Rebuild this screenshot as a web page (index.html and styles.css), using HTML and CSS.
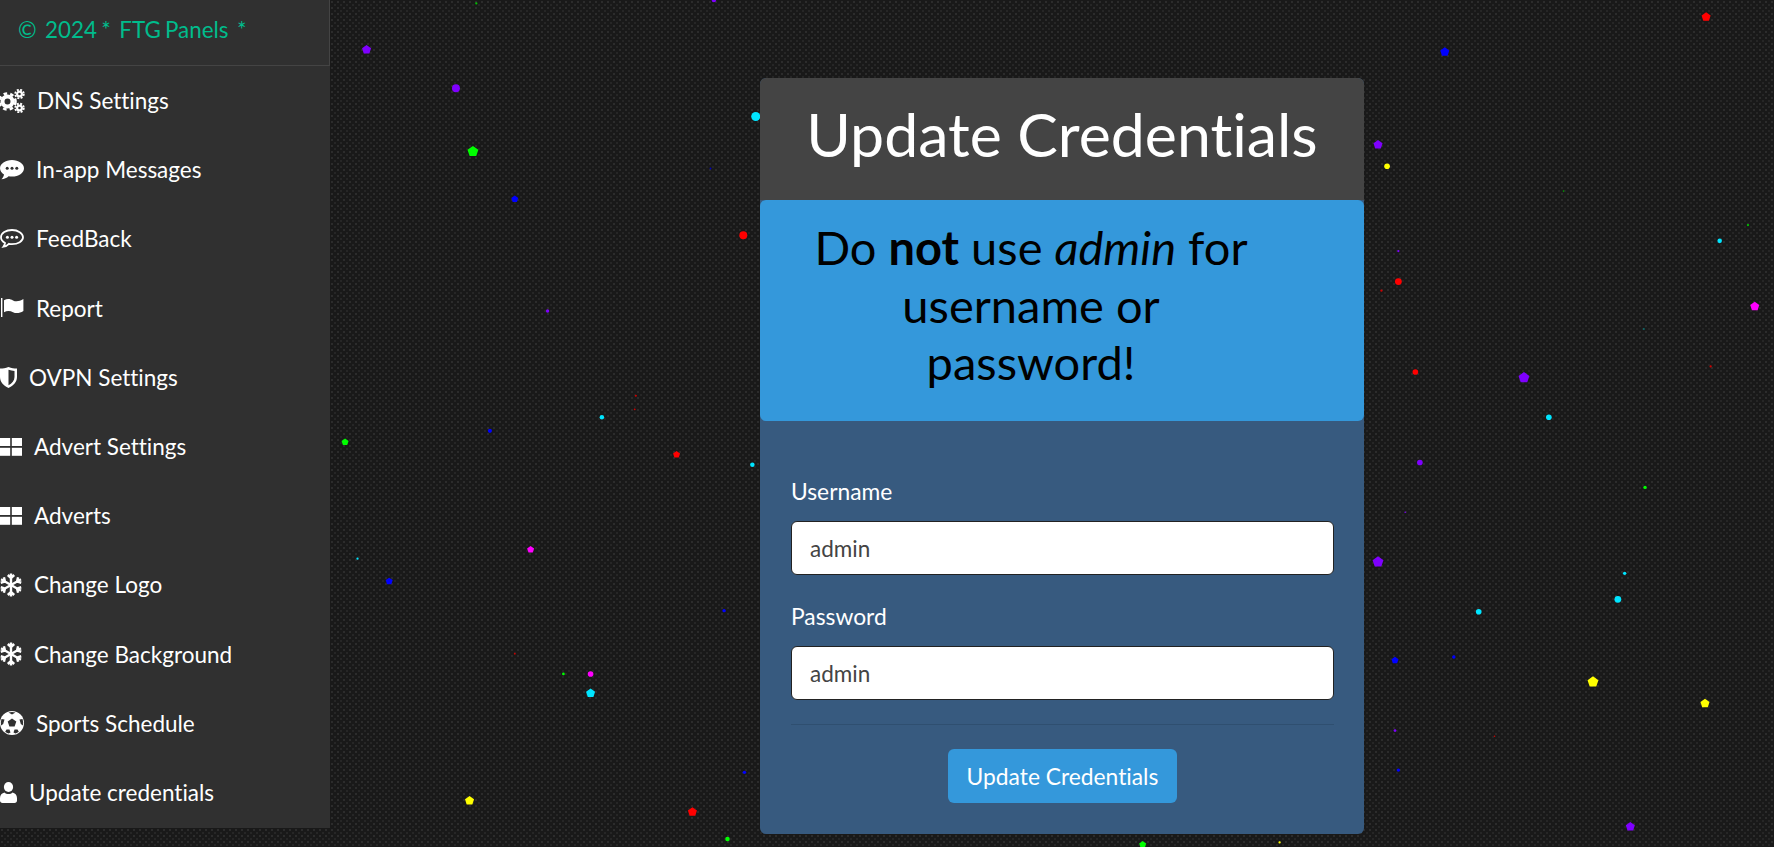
FILE: index.html
```html
<!DOCTYPE html>
<html>
<head>
    <title>Update Credentials</title>
    <link rel="stylesheet" href="styles.css">
</head>
<body>
    <!-- falling dots behind the panel -->
    <svg class="particles" viewBox="0 0 1568 749" preserveAspectRatio="none">
        <defs>
            <polygon id="p3" points="0,-3.200 3.100,-1 1.900,2.600 -1.900,2.600 -3.100,-1"/>
            <polygon id="p4" points="0,-4.200 4,-1.300 2.500,3.400 -2.500,3.400 -4,-1.300"/>
            <polygon id="p5" points="0,-5 4.800,-1.500 2.900,4 -2.900,4 -4.800,-1.500"/>
        </defs>
        <use href="#p4" x="324" y="44" fill="#7f00ff"/>
        <circle cx="421" cy="3" r="1" fill="#00c000"/>
        <circle cx="631" cy="0" r="2" fill="#7f00ff"/>
        <circle cx="403" cy="78" r="3.500" fill="#7f00ff"/>
        <use href="#p5" x="418" y="134" fill="#00ff00"/>
        <use href="#p3" x="455" y="176" fill="#0000ff"/>
        <circle cx="668" cy="103" r="4" fill="#00e5ff"/>
        <circle cx="657" cy="208" r="3.500" fill="#ff0000"/>
        <circle cx="628" cy="149" r=".8" fill="#0000c0"/>
        <circle cx="484" cy="275" r="1.500" fill="#7f00ff"/>
        <circle cx="562" cy="350" r=".9" fill="#d00000"/>
        <circle cx="561" cy="362" r=".8" fill="#d00000"/>
        <circle cx="532" cy="369" r="2" fill="#00e5ff"/>
        <circle cx="433" cy="381" r="1.800" fill="#0000ff"/>
        <use href="#p3" x="305" y="391" fill="#00ff00"/>
        <use href="#p3" x="598" y="402" fill="#ff0000"/>
        <circle cx="665" cy="411" r="2" fill="#00e5ff"/>
        <use href="#p3" x="469" y="486" fill="#ff00ff"/>
        <circle cx="316" cy="494" r="1" fill="#00e5ff"/>
        <use href="#p3" x="344" y="514" fill="#0000ff"/>
        <circle cx="640" cy="540" r="1.500" fill="#0000ff"/>
        <circle cx="455" cy="578" r=".8" fill="#d00000"/>
        <circle cx="498" cy="596" r="1.200" fill="#00ff00"/>
        <circle cx="522" cy="596" r="2.500" fill="#ff00ff"/>
        <use href="#p4" x="522" y="613" fill="#00e5ff"/>
        <circle cx="658" cy="683" r="1.500" fill="#0000ff"/>
        <use href="#p4" x="415" y="708" fill="#ffff00"/>
        <use href="#p4" x="612" y="718" fill="#ff0000"/>
        <circle cx="643" cy="742" r="2" fill="#00ff00"/>
        <use href="#p4" x="1508" y="15" fill="#ff0000"/>
        <use href="#p4" x="1277" y="46" fill="#0000ff"/>
        <use href="#p4" x="1218" y="128" fill="#7f00ff"/>
        <circle cx="1226" cy="147" r="2.500" fill="#ffff00"/>
        <circle cx="1382" cy="169" r=".7" fill="#00a000"/>
        <circle cx="1545" cy="199" r="1" fill="#00c000"/>
        <circle cx="1520" cy="213" r="2" fill="#00e5ff"/>
        <circle cx="1236" cy="222" r="1" fill="#7f00ff"/>
        <circle cx="1236" cy="249" r="3" fill="#ff0000"/>
        <circle cx="1221" cy="257" r="1" fill="#d00000"/>
        <use href="#p4" x="1551" y="271" fill="#ff00ff"/>
        <circle cx="1453" cy="291" r=".7" fill="#00a0a0"/>
        <circle cx="1251" cy="329" r="2.500" fill="#ff0000"/>
        <circle cx="1512" cy="324" r="1" fill="#d00000"/>
        <use href="#p5" x="1347" y="334" fill="#7f00ff"/>
        <circle cx="1369" cy="369" r="2.500" fill="#00e5ff"/>
        <circle cx="1255" cy="409" r="2.500" fill="#7f00ff"/>
        <circle cx="1454" cy="431" r="1.500" fill="#00ff00"/>
        <circle cx="1242" cy="453" r=".7" fill="#7f00ff"/>
        <use href="#p5" x="1218" y="497" fill="#7f00ff"/>
        <circle cx="1436" cy="507" r="1.500" fill="#00e5ff"/>
        <circle cx="1430" cy="530" r="3" fill="#00e5ff"/>
        <circle cx="1307" cy="541" r="2.500" fill="#00e5ff"/>
        <use href="#p3" x="1233" y="584" fill="#0000ff"/>
        <circle cx="1285" cy="581" r="1.500" fill="#0000ff"/>
        <use href="#p5" x="1408" y="603" fill="#ffff00"/>
        <use href="#p4" x="1507" y="622" fill="#ffff00"/>
        <circle cx="1233" cy="646" r="1.200" fill="#7f00ff"/>
        <circle cx="1236" cy="681" r="1.500" fill="#0000ff"/>
        <circle cx="1321" cy="651" r=".7" fill="#d00000"/>
        <use href="#p4" x="1441" y="731" fill="#7f00ff"/>
        <use href="#p3" x="1010" y="747" fill="#00ff00"/>
        <circle cx="1131" cy="745" r="1" fill="#ffff00"/>
    </svg>

    <div class="page">
        <aside class="sidebar">
            <div class="brand">©&nbsp; 2024 *&nbsp; FTG Panels&nbsp; *</div>
            <ul class="menu">
                <li class="menu-item">
                    <svg class="icon" width="25" height="24" viewBox="0 0 25 24">
                        <circle cx="7.500" cy="12.500" r="5" fill="none" stroke="#fff" stroke-width="4"/>
                        <circle cx="7.500" cy="12.500" r="8" fill="none" stroke="#fff" stroke-width="2.600" stroke-dasharray="3.600 3.100"/>
                        <circle cx="19.500" cy="5" r="2.400" fill="none" stroke="#fff" stroke-width="2.200"/>
                        <circle cx="19.500" cy="5" r="4.300" fill="none" stroke="#fff" stroke-width="1.800" stroke-dasharray="2 1.400"/>
                        <circle cx="19.500" cy="19" r="2.400" fill="none" stroke="#fff" stroke-width="2.200"/>
                        <circle cx="19.500" cy="19" r="4.300" fill="none" stroke="#fff" stroke-width="1.800" stroke-dasharray="2 1.400"/>
                    </svg>
                    DNS Settings
                </li>
                <li class="menu-item">
                    <svg class="icon" width="24" height="20" viewBox="0 0 24 20">
                        <path fill="#fff" d="M12 0C5.400 0 0 3.700 0 8.300c0 2.500 1.600 4.700 4 6.200-.2 1.700-1.200 3.400-2.600 4.700 2.900-.2 5.400-1.300 7.200-3 1.100.3 2.200.4 3.400.4 6.600 0 12-3.700 12-8.300S18.600 0 12 0z"/>
                        <circle cx="7.200" cy="8.300" r="1.500" fill="#303030"/>
                        <circle cx="12" cy="8.300" r="1.500" fill="#303030"/>
                        <circle cx="16.800" cy="8.300" r="1.500" fill="#303030"/>
                    </svg>
                    In-app Messages
                </li>
                <li class="menu-item">
                    <svg class="icon" width="24" height="20" viewBox="0 0 24 20">
                        <path fill="none" stroke="#fff" stroke-width="1.800" d="M12 1C6 1 1 4.200 1 8.300c0 2.300 1.500 4.300 4 5.700-.2 1.400-.8 2.600-1.600 3.700 2.300-.4 4.100-1.400 5.500-2.900 1 .3 2 .4 3.100.4 6 0 11-3 11-6.900S18 1 12 1z"/>
                        <circle cx="7.400" cy="8.300" r="1.500" fill="#fff"/>
                        <circle cx="12" cy="8.300" r="1.500" fill="#fff"/>
                        <circle cx="16.600" cy="8.300" r="1.500" fill="#fff"/>
                    </svg>
                    FeedBack
                </li>
                <li class="menu-item">
                    <svg class="icon" width="24" height="20" viewBox="0 0 24 20">
                        <rect x="1" y="0" width="1.400" height="19" fill="#fff"/>
                        <path fill="#fff" d="M4 2.200c3.500-2 6.500-1.200 9 .2 3 1.500 6.500 1 10.400-1.400V13c-3.600 2.400-7.400 2.700-10.400 1.200C10.500 13 7.500 12.300 4 14.200z"/>
                    </svg>
                    Report
                </li>
                <li class="menu-item">
                    <svg class="icon" width="17" height="21" viewBox="0 0 17 21">
                        <path fill="#fff" d="M0 1.500C3 1.500 5.500 1 8.500 0c3 1 5.500 1.500 8.500 1.500V10c0 5-3.500 8.800-8.500 11C3.500 18.800 0 15 0 10z"/>
                        <path fill="#303030" d="M8.500 2.800c2 .6 4 1 6 1.100V10c0 3.600-2.400 6.500-6 8.300z"/>
                    </svg>
                    OVPN Settings
                </li>
                <li class="menu-item">
                    <svg class="icon" width="22" height="18" viewBox="0 0 22 18">
                        <rect x="0" y="0" width="10.200" height="8" fill="#fff"/>
                        <rect x="11.800" y="0" width="10.200" height="8" fill="#fff"/>
                        <rect x="0" y="9.800" width="10.200" height="8" fill="#fff"/>
                        <rect x="11.800" y="9.800" width="10.200" height="8" fill="#fff"/>
                    </svg>
                    Advert Settings
                </li>
                <li class="menu-item">
                    <svg class="icon" width="22" height="18" viewBox="0 0 22 18">
                        <rect x="0" y="0" width="10.200" height="8" fill="#fff"/>
                        <rect x="11.800" y="0" width="10.200" height="8" fill="#fff"/>
                        <rect x="0" y="9.800" width="10.200" height="8" fill="#fff"/>
                        <rect x="11.800" y="9.800" width="10.200" height="8" fill="#fff"/>
                    </svg>
                    Adverts
                </li>
                <li class="menu-item">
                    <svg class="icon" width="22" height="24" viewBox="-11 -12 22 24">
                        <g id="flake" fill="none" stroke="#fff" stroke-width="2.400">
                            <path id="arm" d="M0 0V-11.500M-3.200 -10 0 -7l3.200 -3M0 0V11.500M-3.200 10 0 7l3.200 3"/>
                            <use href="#arm" transform="rotate(60)"/>
                            <use href="#arm" transform="rotate(120)"/>
                        </g>
                    </svg>
                    Change Logo
                </li>
                <li class="menu-item">
                    <svg class="icon" width="22" height="24" viewBox="-11 -12 22 24">
                        <use href="#flake"/>
                    </svg>
                    Change Background
                </li>
                <li class="menu-item">
                    <svg class="icon" width="24" height="24" viewBox="-12 -12 24 24">
                        <circle r="12" fill="#fff"/>
                        <polygon points="0,-4.500 4.300,-1.400 2.600,3.600 -2.600,3.600 -4.300,-1.400" fill="#303030"/>
                        <path fill="#303030" d="M-3.500 -10.500 0 -8.500 3.500 -10.500A11 11 0 0 0 -3.500 -10.500zM10.500 -4 7.500 -3.500 8.800 1 10.900 2.500A11 11 0 0 0 10.500 -4zM-10.500 -4 -7.500 -3.500 -8.800 1 -10.900 2.500A11 11 0 0 1 -10.500 -4zM-6.800 8.800 -5.500 6.500H-2.500L-1.500 9.500 -3.500 10.500A11 11 0 0 1 -6.800 8.800zM6.800 8.800 5.500 6.500H2.500L1.500 9.500 3.500 10.500A11 11 0 0 0 6.800 8.800z"/>
                    </svg>
                    Sports Schedule
                </li>
                <li class="menu-item">
                    <svg class="icon" width="17" height="21" viewBox="0 0 17 21">
                        <ellipse cx="8.500" cy="5" rx="4.600" ry="5" fill="#fff"/>
                        <path fill="#fff" d="M4.500 10.500c1 1 2.400 1.500 4 1.500s3-.5 4-1.500c2.500.5 4.500 2.500 4.500 5.500v2.500c0 1.500-1 2.500-2.500 2.500h-12C1 21 0 20 0 18.500V16c0-3 2-5 4.500-5.500z"/>
                    </svg>
                    Update credentials
                </li>
            </ul>
        </aside>

        <main class="card">
            <h1 class="card-header">Update Credentials</h1>
            <div class="alert">Do <strong>not</strong> use <em>admin</em> for username or password!</div>
            <form class="card-body">
                <label class="field-label" for="username">Username</label>
                <input class="field" type="text" id="username" value="admin">
                <label class="field-label" for="password">Password</label>
                <input class="field" type="text" id="password" value="admin">
                <hr class="divider">
                <div class="actions">
                    <button class="btn" type="button">Update Credentials</button>
                </div>
            </form>
        </main>
    </div>
</body>
</html>
```

FILE: styles.css
```css
html, body {
    height: 100%;
}

body {
    margin: 0;
    overflow: hidden;
    font-family: Lato, "Liberation Sans", sans-serif;
    font-variant-ligatures: none;
    color: #fff;
    background-color: #191919;
    background-image:
        radial-gradient(circle at 2px 2px, #2c2c2c 0 1px, transparent 1.5px),
        radial-gradient(circle at 5px 5px, #262626 0 1px, transparent 1.5px);
    background-size: 6px 6px;
}

.particles {
    position: absolute;
    top: 0;
    left: 0;
    width: 100%;
    height: 100%;
}

.page {
    position: relative;
    display: flex;
    align-items: flex-start;
}

.sidebar {
    flex: 0 0 330px;
    padding-bottom: 1px;
    background: #303030;
    overflow: hidden;
}

.brand {
    height: 66px;
    padding: 0 0 7px 18px;
    border-bottom: 1px solid #444;
    border-right: 1px solid #444;
    box-sizing: border-box;
    display: flex;
    align-items: center;
    font-size: 22.4px;
    word-spacing: -1.5px;
    color: #00bc8c;
    white-space: pre;
}

.menu {
    margin: 0;
    padding: 0;
    list-style: none;
}

.menu-item {
    height: 69.2px;
    display: flex;
    align-items: center;
    gap: 12px;
    font-size: 22.5px;
}

.icon {
    flex: none;
}

.card {
    width: 604px;
    margin: 78px 0 0 430px;
    background: #375a7f;
    border-radius: 6px;
    overflow: hidden;
}

.card-header {
    height: 122px;
    margin: 0;
    background: #444;
    font-size: 60.8px;
    font-weight: 400;
    line-height: 112px;
    text-align: center;
}

.alert {
    height: 221px;
    box-sizing: border-box;
    padding: 19px 108px 0 46px;
    background: #3498db;
    border-radius: 6px;
    color: #000;
    font-size: 47px;
    line-height: 57.5px;
    text-align: center;
}

.card-body {
    padding: 55px 30px 31px 31px;
}

.field-label {
    display: block;
    margin-bottom: 15px;
    font-size: 22.8px;
    line-height: 30px;
}

.field {
    display: block;
    width: 100%;
    height: 54px;
    box-sizing: border-box;
    margin-bottom: 26px;
    padding: 0 18px;
    border: 1px solid #222;
    border-radius: 6px;
    background: #fff;
    color: #444;
    font-family: inherit;
    font-variant-ligatures: none;
    font-size: 22.5px;
}

.field:last-of-type {
    margin-bottom: 0;
}

.divider {
    height: 1px;
    margin: 24px 0 24px;
    border: 0;
    background: #2f4f70;
}

.actions {
    text-align: center;
}

.btn {
    display: block;
    width: 229px;
    height: 54px;
    margin: 0 auto;
    padding: 0;
    border: 0;
    border-radius: 6px;
    background: #3498db;
    color: #fff;
    font-family: inherit;
    font-variant-ligatures: none;
    font-size: 22.8px;
}
```
